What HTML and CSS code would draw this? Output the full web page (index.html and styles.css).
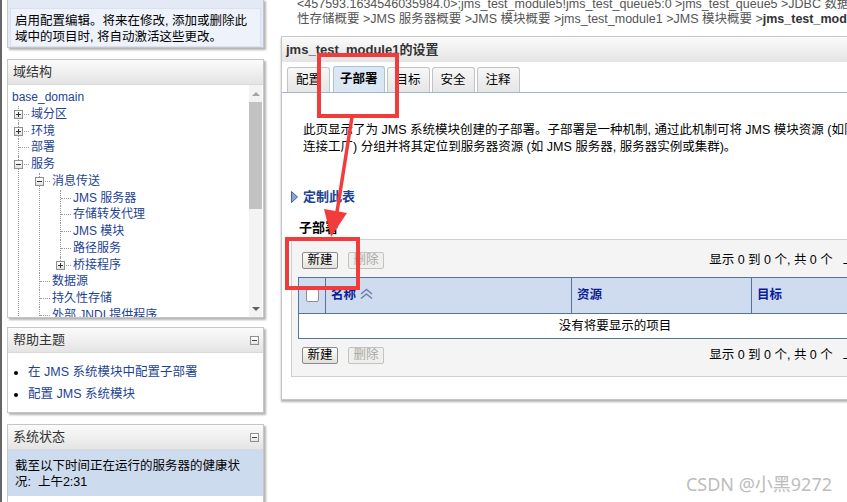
FILE: index.html
```html
<!DOCTYPE html>
<html lang="zh-CN">
<head>
    <meta charset="UTF-8">
    <title>jms_test_module1的设置 - 子部署</title>
    <link rel="stylesheet" href="styles.css">
</head>
<body>
<div class="page">
    <!-- Left column: change center, domain tree, help, status -->
    <aside class="side">
        <section class="panel change">
            <div class="change-msg">启用配置编辑。将来在修改, 添加或删除此<br>域中的项目时, 将自动激活这些更改。</div>
        </section>

        <section class="panel">
            <h2 class="panel-head">域结构</h2>
            <div class="tree-wrap">
                <div class="tree">
                    <a class="root" href="#">base_domain</a>
                    <!-- "more" lists keep going below the visible part of the tree -->
                    <ul class="more">
                        <li><span class="tog plus"></span><a href="#">域分区</a></li>
                        <li><span class="tog plus"></span><a href="#">环境</a></li>
                        <li><a href="#">部署</a></li>
                        <li><span class="tog"></span><a href="#">服务</a>
                            <ul class="more">
                                <li><span class="tog"></span><a href="#">消息传送</a>
                                    <ul>
                                        <li><a href="#">JMS 服务器</a></li>
                                        <li><a href="#">存储转发代理</a></li>
                                        <li><a href="#">JMS 模块</a></li>
                                        <li><a href="#">路径服务</a></li>
                                        <li><span class="tog plus"></span><a href="#">桥接程序</a></li>
                                    </ul>
                                </li>
                                <li><a href="#">数据源</a></li>
                                <li><a href="#">持久性存储</a></li>
                                <li><a href="#">外部 JNDI 提供程序</a></li>
                            </ul>
                        </li>
                    </ul>
                </div>
                <div class="scroll">
                    <span class="arrow up"></span>
                    <span class="thumb"></span>
                    <span class="track"></span>
                    <span class="arrow down"></span>
                </div>
            </div>
        </section>

        <section class="panel">
            <h2 class="panel-head">帮助主题 <span class="fold"></span></h2>
            <ul class="help-list">
                <li><a href="#">在 JMS 系统模块中配置子部署</a></li>
                <li><a href="#">配置 JMS 系统模块</a></li>
            </ul>
        </section>

        <section class="panel">
            <h2 class="panel-head">系统状态 <span class="fold"></span></h2>
            <div class="status-body">截至以下时间正在运行的服务器的健康状<br>况:&nbsp; 上午2:31</div>
            <div class="status-chart"></div>
        </section>
    </aside>

    <!-- Right column: breadcrumb and settings page -->
    <main class="main">
        <div class="crumbs">&lt;457593.1634546035984.0&gt;;jms_test_module5!jms_test_queue5:0 &gt;jms_test_queue5 &gt;JDBC 数据源概要 &gt;持久<br>性存储概要 &gt;JMS 服务器概要 &gt;JMS 模块概要 &gt;jms_test_module1 &gt;JMS 模块概要 &gt;<b>jms_test_module1的设置</b></div>

        <section class="settings">
            <h1 class="settings-head">jms_test_module1的设置</h1>
            <div class="tabs">
                <span class="tab">配置</span>
                <span class="tab on">子部署</span>
                <span class="tab">目标</span>
                <span class="tab">安全</span>
                <span class="tab">注释</span>
            </div>

            <div class="settings-body">
                <p class="intro">此页显示了为 JMS 系统模块创建的子部署。子部署是一种机制, 通过此机制可将 JMS 模块资源 (如队列和主题)<br>连接工厂) 分组并将其定位到服务器资源 (如 JMS 服务器, 服务器实例或集群)。</p>

                <a class="customize" href="#">
                    <svg width="7" height="12" viewBox="0 0 7 12">
                        <polygon points="0.5,0.5 6.5,6 0.5,11.5" fill="#8ea5d2" stroke="#3f5f9e"/>
                    </svg>定制此表</a>

                <h3 class="table-title">子部署</h3>

                <div class="table-box">
                    <div class="table-bar top">
                        <span class="btns"><button>新建</button><button disabled>删除</button></span>
                        <span class="pager"><span>显示 0 到 0 个, 共 0 个</span><span>上一页 | 下一页</span></span>
                    </div>
                    <table class="grid">
                        <colgroup>
                            <col class="c-sel">
                            <col class="c-name">
                            <col class="c-res">
                            <col>
                        </colgroup>
                        <thead>
                        <tr>
                            <th class="sel"><span class="check"></span></th>
                            <th>名称 <svg class="sort" width="15" height="12" viewBox="0 0 15 12">
                                <polyline points="2,6 7.5,1.5 13,6" fill="none" stroke="#7083a8" stroke-width="1.6"/>
                                <polyline points="2,10.5 7.5,6 13,10.5" fill="none" stroke="#7083a8" stroke-width="1.6"/>
                            </svg></th>
                            <th>资源</th>
                            <th>目标</th>
                        </tr>
                        </thead>
                        <tbody>
                        <tr><td class="empty" colspan="4">没有将要显示的项目</td></tr>
                        </tbody>
                    </table>
                    <div class="table-bar bottom">
                        <span class="btns"><button>新建</button><button disabled>删除</button></span>
                        <span class="pager"><span>显示 0 到 0 个, 共 0 个</span><span>上一页 | 下一页</span></span>
                    </div>
                </div>
            </div>
        </section>
    </main>
</div>

<!-- Red annotation marks drawn over the screenshot -->
<svg class="marks" width="847" height="502" viewBox="0 0 847 502">
    <rect x="319" y="55" width="78" height="61" fill="none" stroke="#f23c3c" stroke-width="4"/>
    <rect x="287" y="239" width="71" height="49" fill="none" stroke="#f23c3c" stroke-width="4"/>
    <line x1="352" y1="117" x2="337" y2="212" stroke="#f23c3c" stroke-width="3.5"/>
    <polygon points="331,237 324,209 347,213" fill="#f23c3c"/>
</svg>

<div class="watermark">CSDN @小黑9272</div>
</body>
</html>
```

FILE: styles.css
```css
/* Page frame */
html, body {
    height: 100%;
}

body {
    margin: 0;
    border-left: 2px solid #666;
    background: #fff;
    color: #000;
    font: 12.5px/1.3 "Liberation Sans", "Noto Sans CJK SC", sans-serif;
    overflow: hidden;
}

a {
    color: #1d4394;
    text-decoration: none;
}

.page {
    display: flex;
    align-items: flex-start;
    padding-left: 5px;
}

/* Left column panels */
.side {
    flex: none;
    width: 257px;
}

.panel {
    margin-top: 11px;
    border: 1px solid #c6c6c6;
    background: #fff;
    box-shadow: 2px 2px 2px rgba(0, 0, 0, 0.3);
}

.panel + .panel + .panel {
    margin-top: 9px;
}

.panel + .panel + .panel + .panel {
    margin-top: 11px;
}

.panel-head {
    display: flex;
    justify-content: space-between;
    align-items: center;
    height: 23px;
    margin: 0;
    padding: 1px 4px 0 5px;
    border-bottom: 1px solid #d9d9d9;
    background: linear-gradient(#fbfbfb, #e4e4e4);
    color: #333;
    font-size: 13px;
    font-weight: normal;
}

/* Collapse box in the panel headers */
.fold {
    position: relative;
    width: 7px;
    height: 7px;
    border: 1px solid #8f8f8f;
    background: linear-gradient(#fff, #e4e4e4);
}

.fold::before {
    content: "";
    position: absolute;
    left: 1px;
    top: 3px;
    width: 5px;
    height: 1px;
    background: #444;
}

/* Change center message */
.change {
    margin-top: -1px;
    padding: 8px 2px 0;
    background: #e4e9f6;
}

.change-msg {
    padding: 4px 4px 1px;
    border: 1px solid #dae1f0;
    background: #eef2fb;
    line-height: 16px;
}

/* Domain structure tree */
.tree-wrap {
    display: flex;
    height: 232px;
}

.tree {
    flex: 1;
    overflow: hidden;
    padding: 4px 0 0 4px;
    font-size: 12px;
    line-height: 16.75px;
}

.tree ul {
    list-style: none;
    margin: 0 0 0 8px;
    padding: 0;
}

.tree > ul {
    margin-left: 6px;
}

.tree li {
    position: relative;
    padding-left: 13px;
    white-space: nowrap;
}

.tree li::before {
    content: "";
    position: absolute;
    left: 1px;
    top: 8px;
    width: 10px;
    border-top: 1px dotted #9a9a9a;
}

.tree li::after {
    content: "";
    position: absolute;
    left: 0;
    top: 0;
    bottom: 0;
    border-left: 1px dotted #9a9a9a;
}

.tree li:last-child::after {
    bottom: auto;
    height: 8px;
}

.tree ul.more > li:last-child::after {
    bottom: -40px;
    height: auto;
}

.tog {
    position: absolute;
    left: -4px;
    top: 4px;
    z-index: 1;
    width: 7px;
    height: 7px;
    border: 1px solid #8f8f8f;
    background: linear-gradient(#fff, #e2e2e2);
}

.tog::before {
    content: "";
    position: absolute;
    left: 1px;
    top: 3px;
    width: 5px;
    height: 1px;
    background: #333;
}

.tog.plus::after {
    content: "";
    position: absolute;
    left: 3px;
    top: 1px;
    width: 1px;
    height: 5px;
    background: #333;
}

/* Fake scrollbar of the tree */
.scroll {
    flex: none;
    display: flex;
    flex-direction: column;
    width: 13px;
    margin-right: 1px;
    background: #f3f3f3;
}

.arrow {
    display: flex;
    justify-content: center;
    align-items: center;
    height: 17px;
}

.arrow::before {
    content: "";
    border-left: 4px solid transparent;
    border-right: 4px solid transparent;
}

.arrow.up::before {
    border-bottom: 4px solid #a3a3a3;
}

.arrow.down::before {
    border-top: 4px solid #606060;
}

.thumb {
    height: 107px;
    background: #c2c2c2;
}

.track {
    flex: 1;
}

/* Help topics */
.help-list {
    margin: 0;
    padding: 8px 0 7px 20px;
    line-height: 22px;
}

/* System status */
.status-body {
    padding: 8px 7px 6px;
    background: #cddbef;
    line-height: 16px;
}

.status-chart {
    width: 90px;
    height: 12px;
    margin: 7px 0 0 9px;
    border-top: 1px solid #a5a5a5;
}

/* Right column */
.main {
    flex: none;
    width: 690px;
    margin-left: 17px;
}

.crumbs {
    margin-top: -3px;
    padding-left: 16px;
    color: #555;
    line-height: 15px;
    white-space: nowrap;
}

.crumbs b {
    color: #333;
}

.settings {
    margin-top: 9px;
    border: 1px solid #c6c6c6;
    box-shadow: 0 2px 2px rgba(0, 0, 0, 0.3);
}

.settings-head {
    height: 25px;
    margin: 0;
    padding-left: 4px;
    background: linear-gradient(#fbfbfb, #e4e4e4);
    color: #333;
    font-size: 13px;
    line-height: 25px;
}

/* Tabs */
.tabs {
    display: flex;
    align-items: flex-end;
    gap: 2px;
    padding: 4px 0 0 5px;
    border-bottom: 1px solid #9cb5d2;
}

.tab {
    height: 24px;
    padding: 0 8px;
    border: 1px solid #c3c3c3;
    border-bottom: 0;
    border-radius: 3px 3px 0 0;
    background: linear-gradient(#f7f7f7, #e6e6e6);
    line-height: 25px;
}

.tab.on {
    height: 25px;
    margin-left: 1px;
    padding: 0 6px;
    border-color: #a8c1dd;
    background: #dce7f4;
    font-weight: bold;
}

.settings-body {
    padding: 29px 0 22px 9px;
}

.intro {
    margin: 0 0 32px 12px;
    line-height: 17px;
    white-space: nowrap;
}

.customize {
    display: flex;
    align-items: center;
    gap: 5px;
    margin-bottom: 14px;
    font-size: 13px;
    font-weight: bold;
    line-height: 17px;
}

.table-title {
    margin: 0 0 3px 8px;
    font-size: 13px;
    line-height: 17px;
}

/* Sub-deployment table */
.table-box {
    width: 634px;
    padding: 12px 6px;
    border: 1px solid #cfcfcf;
    background: #f4f4f4;
}

.table-bar {
    display: flex;
    justify-content: space-between;
    align-items: center;
    height: 17px;
    padding: 0 4px;
}

.table-bar.top {
    margin-bottom: 8px;
}

.table-bar.bottom {
    margin-top: 8px;
}

.btns {
    display: flex;
    gap: 10px;
}

.btns button {
    width: 36px;
    height: 17px;
    padding: 0;
    border: 1px solid #8a8a8a;
    border-radius: 2px;
    background: linear-gradient(#fdfdfb, #e2e1d9);
    color: #000;
    font: 12.5px/15px "Liberation Sans", "Noto Sans CJK SC", sans-serif;
}

.btns button:disabled {
    border-color: #c3c3c3;
    background: #efefeb;
    color: #a9a9a9;
}

.pager {
    display: flex;
    gap: 10px;
}

.grid {
    width: 100%;
    table-layout: fixed;
    border-collapse: collapse;
    border: 1px solid #56749a;
}

.c-sel {
    width: 27px;
}

.c-name {
    width: 246px;
}

.c-res {
    width: 180px;
}

.grid th {
    height: 35px;
    padding: 0 0 0 5px;
    border-left: 1px solid #56749a;
    background: #cfdcef;
    color: #0b1c96;
    text-align: left;
}

.grid th.sel {
    padding: 0;
}

.check {
    display: block;
    width: 11px;
    height: 11px;
    margin: 0 auto;
    border: 1px solid #8d8d8d;
    border-radius: 2px;
    background: #fff;
}

.sort {
    vertical-align: -1px;
}

.grid td.empty {
    height: 24px;
    padding: 0;
    border-top: 1px solid #56749a;
    background: #fff;
    text-align: center;
}

/* Overlays */
.marks {
    position: absolute;
    left: 0;
    top: 0;
    pointer-events: none;
}

.watermark {
    position: absolute;
    right: 15px;
    bottom: 7px;
    color: #bdbdbd;
    font: 18px/22px "Noto Sans", "Noto Sans CJK SC", sans-serif;
}
```
